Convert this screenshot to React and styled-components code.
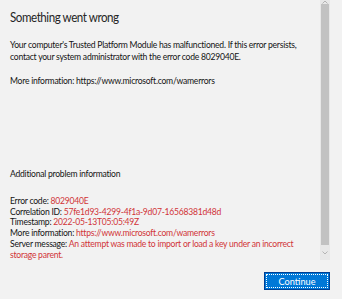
import React from "react"
import styled, { createGlobalStyle } from "styled-components"

const Global = createGlobalStyle`
  html, body {
    margin: 0;
    padding: 0;
    background: #f2f2f2;
  }
  body {
    font-family: Lato, "Open Sans", sans-serif;
    color: #1b1b1b;
  }
`

const Frame = styled.div`
  width: 342px;
  height: 299px;
  display: grid;
  grid-template-columns: 320px 10px 12px;
  grid-template-rows: 260px 39px;
  background: #f2f2f2;
  overflow: hidden;
`

const Content = styled.div`
  padding: 7px 0 0 10px;
  overflow: hidden;
`

const Title = styled.h1`
  margin: 0 0 12px;
  font-size: 11.6px;
  font-weight: 400;
  letter-spacing: -0.45px;
  line-height: 20px;
  color: #262626;
  transform-origin: left center;
  transform: scaleY(1.15);
`

const Para = styled.p`
  margin: 0 0 ${(p) => p.gap || 0}px;
  font-size: 8.6px;
  letter-spacing: -0.25px;
  line-height: 12px;
  color: #141414;
`

const Details = styled.div`
  margin-top: 82px;
  font-size: 8.6px;
  letter-spacing: -0.25px;
  line-height: 10.8px;
  color: #141414;
`

const Heading = styled.div`
  margin-bottom: 16px;
`

const Row = styled.div``

const Value = styled.span`
  color: #d13438;
`

const Scrollbar = styled.div`
  display: flex;
  flex-direction: column;
  background: #e8e8e8;
  height: 260px;
  overflow: hidden;
`

const Arrow = styled.div`
  flex: none;
  height: ${(p) => p.h}px;
  display: flex;
  align-items: ${(p) => (p.up ? "flex-end" : "center")};
  justify-content: center;
  color: #a6a6a6;
  overflow: hidden;
`

const Thumb = styled.div`
  flex: 1;
  background: #c2c2c2;
  margin: 0 1px;
`

const Footer = styled.div`
  grid-column: 1 / 3;
  display: flex;
  justify-content: flex-end;
  padding-top: 12px;
`

const Button = styled.button`
  width: 66px;
  height: 18px;
  padding: 0;
  background: #0078d7;
  border: 1px solid #003e92;
  outline: 1px dotted #ffffff;
  outline-offset: -3px;
  color: #ffffff;
  font-family: Lato, "Open Sans", sans-serif;
  font-size: 9.2px;
`

const Chevron = ({ up }) => (
  <svg width="6" height="4" viewBox="0 0 6 4">
    <path
      d={up ? "M0.5 3.5 L3 1 L5.5 3.5" : "M0.5 0.5 L3 3 L5.5 0.5"}
      fill="none"
      stroke="currentColor"
      strokeWidth="0.8"
    />
  </svg>
)

export default function App() {
  return (
    <>
      <Global />
      <Frame>
        <Content>
          <Title>Something went wrong</Title>
          <Para gap={12}>
            Your computer's Trusted Platform Module has malfunctioned. If this error persists,
            contact your system administrator with the error code 8029040E.
          </Para>
          <Para>More information: https://www.microsoft.com/wamerrors</Para>
          <Details>
            <Heading>Additional problem information</Heading>
            <Row>
              Error code: <Value>8029040E</Value>
            </Row>
            <Row>
              Correlation ID: <Value>57fe1d93-4299-4f1a-9d07-16568381d48d</Value>
            </Row>
            <Row>
              Timestamp: <Value>2022-05-13T05:05:49Z</Value>
            </Row>
            <Row>
              More information: <Value>https://www.microsoft.com/wamerrors</Value>
            </Row>
            <Row>
              Server message:{" "}
              <Value>An attempt was made to import or load a key under an incorrect storage parent.</Value>
            </Row>
          </Details>
        </Content>
        <Scrollbar>
          <Arrow up h={4}>
            <Chevron up />
          </Arrow>
          <Thumb />
          <Arrow h={15}>
            <Chevron />
          </Arrow>
        </Scrollbar>
        <div />
        <Footer>
          <Button>Continue</Button>
        </Footer>
      </Frame>
    </>
  )
}
